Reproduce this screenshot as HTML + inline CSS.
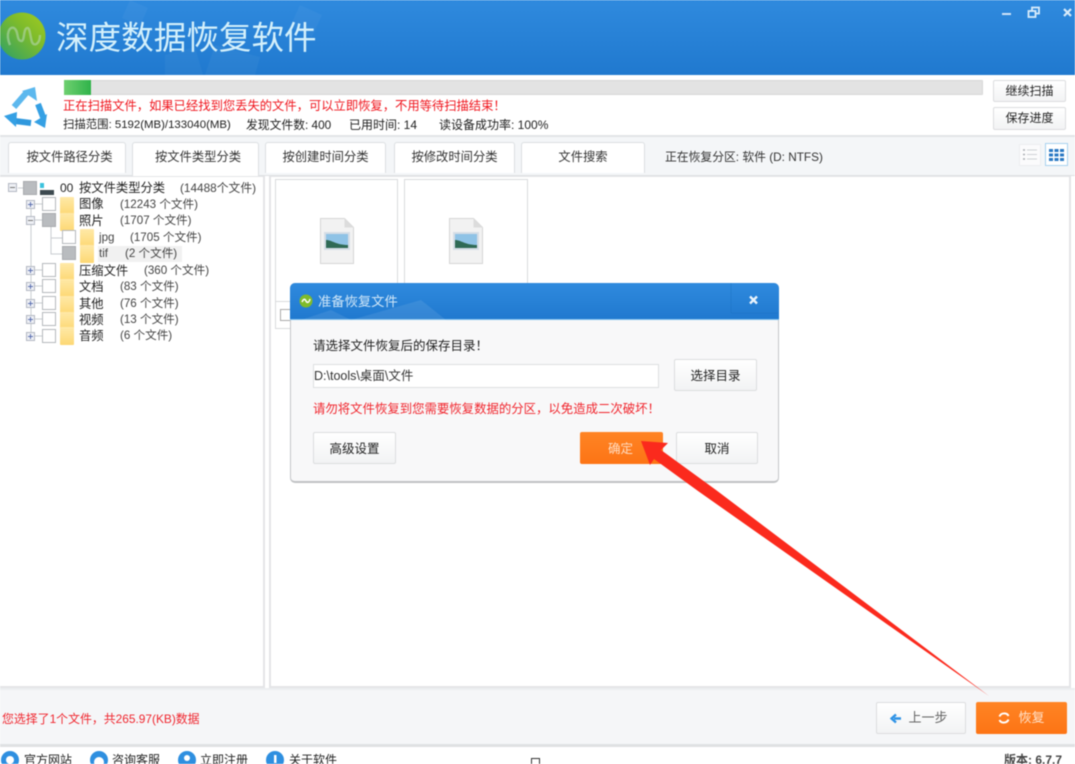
<!DOCTYPE html>
<html lang="zh"><head><meta charset="utf-8"><title>深度数据恢复软件</title>
<style>
html,body{margin:0;padding:0;background:#fff}
#p{position:relative;width:1075px;height:764px;overflow:hidden;background:#fff;font-family:"Liberation Sans","Noto Sans CJK SC",sans-serif;font-size:12px;color:#222;filter:blur(.5px)}
#p div{position:absolute;box-sizing:border-box}
.t{white-space:nowrap;line-height:16px}
.btn .t,.tab .t,.or .t{line-height:inherit}
.tab{top:142px;height:31px;background:#fff;border:1px solid #dcdfe2;border-bottom:none;border-radius:3px 3px 0 0;text-align:center;line-height:29px;font-size:12.300px;color:#333}
.btn{background:linear-gradient(#fff,#f2f3f4);border:1px solid #dcdddf;border-radius:2px;text-align:center;color:#222}
.cb{width:14px;height:14px;background:#fff;border:1px solid #b5b9bd}
.cb.on{background:#b9bcbf;border-color:#a8abae}
.pm{width:9px;height:9px;background:linear-gradient(#5b6fb0,#5b6fb0) center/5px 1px no-repeat,linear-gradient(#5b6fb0,#5b6fb0) center/1px 5px no-repeat,#eef0f5;border:1px solid #b3b8c2}
.pm.m{background:linear-gradient(#777,#777) center/5px 1px no-repeat,#eef0f5}
.f{width:14px;height:18px;background:linear-gradient(#ffe9a8,#fdd874);border-radius:1px}
.cell{background:#fff;border:1px solid #d9dbdd}
.or{background:linear-gradient(#ff8424,#fd7415);color:#fff;border-radius:2px;text-align:center}
.l{font-size:12.300px}.g{font-size:11.600px;color:#444}
</style></head><body><div id="p">

<!-- header -->
<div style="left:0;top:0;width:1075px;height:75px;background:linear-gradient(#2f8ade,#2079cf)"></div>
<svg style="position:absolute;left:0;top:0" width="420" height="75"><g fill="#fff" fill-opacity=".04"><path d="M130 0l18 8-8 18-18-8zM300 5l22 10-10 22-22-10zM165 55l30-8 8 28h-38zM215 45l45 12-5 18h-50z"/></g></svg>
<svg style="position:absolute;left:0;top:11" width="48" height="52" viewBox="0 0 48 52">
<defs><linearGradient id="g" x1="0" x2="1" y1="1" y2="0"><stop offset="0" stop-color="#2a9f6a"/><stop offset=".6" stop-color="#7dbb2b"/><stop offset="1" stop-color="#a3cc20"/></linearGradient></defs>
<circle cx="22" cy="25" r="23.500" fill="url(#g)"/>
<path d="M10 34C5 22 10 15 14 17c5 3 2 12 7 13 4 1 2-12 6-13 3-1 3 8 5 14 2 5 8 2 8-7" fill="none" stroke="#b9d8b8" stroke-opacity=".55" stroke-width="2.400"/>
</svg>
<div class="t" style="left:56px;top:17px;font-size:32.600px;line-height:42px;color:#d4f0fb">深度数据恢复软件</div>
<div style="left:1002px;top:13px;width:9px;height:2px;background:#cfe4f7"></div>
<svg style="position:absolute;left:1027px;top:6px" width="14" height="13"><rect x="5" y="1.500" width="7" height="6" fill="none" stroke="#d8ebfa" stroke-width="1.800"/><rect x="1.500" y="5" width="7" height="6" fill="#2c86da" stroke="#d8ebfa" stroke-width="1.800"/></svg>
<svg style="position:absolute;left:1062px;top:7px" width="11" height="11"><path d="M2 2l7 7M9 2l-7 7" stroke="#d8ebfa" stroke-width="2.200"/></svg>

<!-- scan strip -->
<svg style="position:absolute;left:0;top:80px" width="50" height="52" viewBox="0 80 50 52">
<g fill="#35a0e4"><path d="M14 107L27 92" stroke="#5cb8ee" stroke-width="6" fill="none"/><path d="M22 91l13-4 2 14z" fill="#5cb8ee"/>
<path d="M38 104l5 13" stroke="#35a0e4" stroke-width="6" fill="none"/><path d="M34 122l13-8-2 14z"/>
<path d="M31 123l-16-2" stroke="#2f98dd" stroke-width="6" fill="none"/><path d="M4 116l13-4-1 15z"/></g></svg>
<div style="left:64px;top:80px;width:919px;height:15px;background:#e3e3e3;border:1px solid #d8d8d8;border-radius:1px"></div>
<div style="left:64px;top:80px;width:27px;height:15px;background:linear-gradient(90deg,#6fd070,#2fb34a)"></div>
<div class="t" style="left:63px;top:98px;color:#f0161e;font-size:12.300px">正在扫描文件，如果已经找到您丢失的文件，可以立即恢复，不用等待扫描结束！</div>
<div class="t" style="left:63px;top:117px;font-size:11.400px">扫描范围: 5192(MB)/133040(MB)</div>
<div class="t" style="left:246px;top:117px;font-size:11.800px">发现文件数: 400</div>
<div class="t" style="left:349px;top:117px;font-size:12px">已用时间: 14</div>
<div class="t" style="left:439px;top:117px;font-size:12px">读设备成功率: 100%</div>
<div class="btn" style="left:993px;top:80px;width:73px;height:22px;line-height:20px"><span class="t">继续扫描</span></div>
<div class="btn" style="left:993px;top:107px;width:73px;height:23px;line-height:21px"><span class="t">保存进度</span></div>

<!-- tabs bar -->
<div style="left:0;top:135px;width:1075px;height:41px;background:#f4f6f8;border-top:2px solid #e3e5e7;border-bottom:1px solid #dfe1e3"></div>
<div class="tab" style="left:8px;width:118px;padding-left:5px"><span class="t">按文件路径分类</span></div>
<div class="tab" style="left:132px;width:127px;height:35px;padding-left:5px"><span class="t">按文件类型分类</span></div>
<div class="tab" style="left:265px;width:121px"><span class="t">按创建时间分类</span></div>
<div class="tab" style="left:394px;width:121px"><span class="t">按修改时间分类</span></div>
<div class="tab" style="left:521px;width:124px"><span class="t">文件搜索</span></div>
<div class="t" style="left:665px;top:149px;font-size:11.800px;color:#333">正在恢复分区: 软件 (D: NTFS)</div>
<div style="left:1019px;top:144px;width:22px;height:22px;background:#fbfbfc;border:1px solid #eceef0"></div>
<svg style="position:absolute;left:1022px;top:148px" width="16" height="13"><path d="M5 2h10M5 6.500h10M5 11h10" stroke="#cfd2d6"/><path d="M1 2h2M1 6.500h2M1 11h2" stroke="#a9adb2" stroke-width="1.500"/></svg>
<div style="left:1045px;top:143px;width:23px;height:23px;background:#fff;border:1px solid #a9d2ef"></div>
<svg style="position:absolute;left:1049px;top:149px" width="15" height="12"><g fill="#2a79c4"><rect width="4" height="3"/><rect x="5.500" width="4" height="3"/><rect x="11" width="4" height="3"/><rect y="4.500" width="4" height="3"/><rect x="5.500" y="4.500" width="4" height="3"/><rect x="11" y="4.500" width="4" height="3"/><rect y="9" width="4" height="3"/><rect x="5.500" y="9" width="4" height="3"/><rect x="11" y="9" width="4" height="3"/></g></svg>

<!-- left tree -->
<div style="left:0;top:176px;width:265px;height:512px;background:#fff;border:solid #e4e5e7;border-width:1px 2px 2px 0"></div>
<svg style="position:absolute;left:0;top:176px" width="100" height="170"><path d="M31 30v135M51 46v32h11M51 62h11M18 12h5M35 28h7M35 44h7M35 94h7M35 110h7M35 127h7M35 143h7M35 160h7" stroke="#c9ccd0" fill="none"/></svg>
<div class="pm m" style="left:8px;top:183px"></div>
<div class="cb on" style="left:23px;top:181px"></div>
<svg style="position:absolute;left:39px;top:181px" width="16" height="15"><rect x="1" y="2" width="4" height="5" fill="#3cc2dc"/><rect x="1" y="9" width="14" height="5" fill="#3d4a50"/></svg>
<div class="t" style="left:60px;top:180px">00</div>
<div class="t l" style="left:79px;top:180px">按文件类型分类</div>
<div class="t g" style="left:180px;top:180px;font-size:11.800px">(14488个文件)</div>

<div class="pm" style="left:26px;top:200px"></div><div class="cb" style="left:42px;top:197px"></div><div class="f" style="left:60px;top:197px"></div>
<div class="t l" style="left:79px;top:196px">图像</div><div class="t g" style="left:120px;top:197px">(12243 个文件)</div>

<div class="pm m" style="left:26px;top:216px"></div><div class="cb on" style="left:42px;top:213px"></div><div class="f" style="left:60px;top:213px"></div>
<div class="t l" style="left:79px;top:213px">照片</div><div class="t g" style="left:120px;top:213px">(1707 个文件)</div>

<div class="cb" style="left:62px;top:230px"></div><div class="f" style="left:80px;top:229px"></div>
<div class="t g" style="left:99px;top:230px">jpg</div><div class="t g" style="left:130px;top:230px">(1705 个文件)</div>

<div style="left:98px;top:246px;width:84px;height:16px;background:#f1f1f1"></div>
<div class="cb on" style="left:62px;top:246px"></div><div class="f" style="left:80px;top:245px"></div>
<div class="t g" style="left:99px;top:246px">tif</div><div class="t g" style="left:125px;top:246px">(2 个文件)</div>

<div class="pm" style="left:26px;top:266px"></div><div class="cb" style="left:42px;top:263px"></div><div class="f" style="left:60px;top:263px"></div>
<div class="t l" style="left:79px;top:263px">压缩文件</div><div class="t g" style="left:144px;top:263px">(360 个文件)</div>

<div class="pm" style="left:26px;top:282px"></div><div class="cb" style="left:42px;top:279px"></div><div class="f" style="left:60px;top:279px"></div>
<div class="t l" style="left:79px;top:279px">文档</div><div class="t g" style="left:120px;top:279px">(83 个文件)</div>

<div class="pm" style="left:26px;top:299px"></div><div class="cb" style="left:42px;top:296px"></div><div class="f" style="left:60px;top:296px"></div>
<div class="t l" style="left:79px;top:296px">其他</div><div class="t g" style="left:120px;top:296px">(76 个文件)</div>

<div class="pm" style="left:26px;top:315px"></div><div class="cb" style="left:42px;top:312px"></div><div class="f" style="left:60px;top:312px"></div>
<div class="t l" style="left:79px;top:312px">视频</div><div class="t g" style="left:120px;top:312px">(13 个文件)</div>

<div class="pm" style="left:26px;top:332px"></div><div class="cb" style="left:42px;top:329px"></div><div class="f" style="left:60px;top:327px"></div>
<div class="t l" style="left:79px;top:328px">音频</div><div class="t g" style="left:120px;top:328px">(6 个文件)</div>

<!-- right panel -->
<div style="left:269px;top:176px;width:802px;height:512px;background:#fff;border:solid #e4e5e7;border-width:1px 2px 2px 2px"></div>
<div class="cell" style="left:275px;top:179px;width:123px;height:150px"></div>
<div class="cell" style="left:404px;top:179px;width:124px;height:150px"></div>
<div style="left:275px;top:301px;width:20px;height:28px;border-top:1px solid #d9dbdd"></div>
<div style="left:280px;top:309px;width:12px;height:12px;border:1px solid #aaa;background:#fff"></div>
<svg style="position:absolute;left:320px;top:218px" width="34" height="46" viewBox="0 0 34 46"><path d="M.5.500h24l9 9v36H.5z" fill="#f2f2f2" stroke="#d6d6d6"/><path d="M24.500.500v9h9z" fill="#dcdcdc"/><rect x="4" y="14" width="26" height="18" fill="#d6dde6"/><rect x="6" y="16" width="22" height="14" fill="#8fc3e6"/><path d="M6 22c6 0 10 5 22 5v3H6z" fill="#2f6a55"/></svg>
<svg style="position:absolute;left:449px;top:218px" width="34" height="46" viewBox="0 0 34 46"><path d="M.5.500h24l9 9v36H.5z" fill="#f2f2f2" stroke="#d6d6d6"/><path d="M24.500.500v9h9z" fill="#dcdcdc"/><rect x="4" y="14" width="26" height="18" fill="#d6dde6"/><rect x="6" y="16" width="22" height="14" fill="#8fc3e6"/><path d="M6 22c6 0 10 5 22 5v3H6z" fill="#2f6a55"/></svg>

<!-- footer -->
<div style="left:0;top:688px;width:1075px;height:56px;background:#f5f6f8;border-top:2px solid #eceef0"></div>
<div class="t" style="left:2px;top:711px;color:#f0262e;font-size:11.900px">您选择了1个文件，共265.97(KB)数据</div>
<div class="btn" style="left:876px;top:702px;width:90px;height:32px;line-height:30px;font-size:13px;color:#666;padding-left:14px"><span class="t">上一步</span></div>
<svg style="position:absolute;left:890px;top:713px" width="12" height="11"><path d="M11 5.500H4M6 1.500L1.500 5.500 6 9.500" fill="none" stroke="#2f93e6" stroke-width="2.400"/></svg>
<div class="or" style="left:976px;top:702px;width:91px;height:32px;line-height:31px;font-size:13px;padding-left:20px;color:#ffe3cc"><span class="t">恢复</span></div>
<svg style="position:absolute;left:997px;top:711px" width="14" height="14"><path d="M2.500 5.500C4 1.500 10 1.500 11.500 5M11.500 8.500C10 12.500 4 12.500 2.500 9" fill="none" stroke="#fff" stroke-width="2"/></svg>
<div style="left:0;top:744px;width:1075px;height:20px;background:#fff;border-top:3px solid #dfe1e3"></div>
<svg style="position:absolute;left:0;top:749px" width="300" height="15"><g fill="#2e8fe0"><circle cx="10" cy="11" r="9"/><circle cx="99" cy="11" r="9"/><circle cx="187" cy="11" r="9"/><circle cx="275" cy="11" r="9"/></g><g fill="#fff"><circle cx="10" cy="11" r="4"/><circle cx="99" cy="13" r="5"/><circle cx="187" cy="9" r="3"/><rect x="274" y="6" width="2.500" height="8"/></g></svg>
<div class="t" style="left:24px;top:752px">官方网站</div>
<div class="t" style="left:112px;top:752px">咨询客服</div>
<div class="t" style="left:200px;top:752px">立即注册</div>
<div class="t" style="left:289px;top:752px">关于软件</div>
<div style="left:531px;top:758px;width:9px;height:6px;background:#fff;border:1px solid #333;border-bottom:none"></div>
<div class="t" style="left:1004px;top:752px;font-weight:bold;color:#444">版本: 6.7.7</div>

<!-- dialog -->
<div style="left:290px;top:283px;width:489px;height:200px;background:#f8f8f9;border:1px solid #c4c6c8;border-bottom:2px solid #c0c2c4;border-radius:5px"></div>
<div style="left:290px;top:283px;width:489px;height:37px;background:linear-gradient(#2f8ade,#2079cf);border-radius:5px 5px 0 0;border-bottom:1px solid #7ec0ee"></div>
<svg style="position:absolute;left:291px;top:283px" width="487" height="37"><path d="M60 37l70-20 25 20zM10 37l30-10 20 10z" fill="#fff" fill-opacity=".09"/><path d="M440 0v30M440 30h47" stroke="#1c71c2" stroke-opacity=".5"/><circle cx="15" cy="18" r="6.500" fill="#7fbb2a"/><path d="M11 19c2-4 3-3 4-1s3 2 4-2" fill="none" stroke="#fff" stroke-width="1.500"/><path d="M459 13.500l7 7M466 13.500l-7 7" stroke="#eaf4fc" stroke-width="2.400"/></svg>
<div class="t" style="left:318px;top:294px;font-size:13.300px;color:#cfe6f8">准备恢复文件</div>
<div class="t" style="left:313px;top:338px;font-size:12.500px">请选择文件恢复后的保存目录！</div>
<div style="left:313px;top:364px;width:346px;height:24px;background:#fff;border:1px solid #dedfe1"></div>
<div class="t" style="left:314px;top:368px;font-size:12.500px;color:#333">D:\tools\桌面\文件</div>
<div class="btn" style="left:674px;top:359px;width:83px;height:32px;line-height:33px;font-size:12.500px"><span class="t">选择目录</span></div>
<div class="t" style="left:313px;top:401px;font-size:12.400px;color:#f1252d">请勿将文件恢复到您需要恢复数据的分区，以免造成二次破坏！</div>
<div class="btn" style="left:313px;top:432px;width:83px;height:32px;line-height:33px;font-size:12.500px"><span class="t">高级设置</span></div>
<div class="or" style="left:580px;top:432px;width:83px;height:32px;line-height:35px;font-size:12.500px;color:#ffdcc0;padding-right:2px"><span class="t">确定</span></div>
<div class="btn" style="left:676px;top:432px;width:82px;height:32px;line-height:33px;font-size:12.500px"><span class="t">取消</span></div>

<!-- arrow -->
<svg style="position:absolute;left:0;top:0" width="1075" height="764"><path d="M641 441L668 443 661 450 716 490 989 696 698 491 654 459 650 465z" fill="#fb2a1d"/></svg>

</div></body></html>
